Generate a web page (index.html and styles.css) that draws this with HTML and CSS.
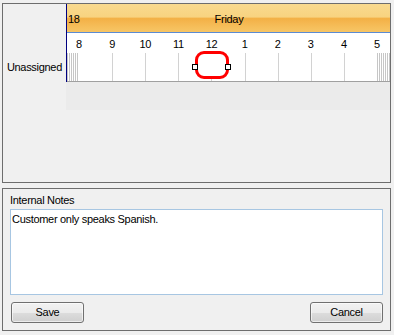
FILE: index.html
```html
<!DOCTYPE html>
<html>
<head>
<meta charset="utf-8">
<link rel="stylesheet" href="styles.css">
</head>
<body>
<div class="window">
  <div class="panel schedule">
    <div class="resources">
      <div class="resource-label">Unassigned</div>
    </div>
    <div class="timeline">
      <div class="timeline-main">
        <div class="day-header">
          <span class="day-num">18</span>
          <span class="day-name">Friday</span>
          <span></span>
        </div>
        <div class="hour-labels">
          <span>8</span><span>9</span><span>10</span><span>11</span><span>12</span><span>1</span><span>2</span><span>3</span><span>4</span><span>5</span>
        </div>
        <div class="row">
          <div class="offhours"></div>
          <div class="hours">
            <div class="cell"></div><div class="cell"></div><div class="cell"></div>
            <div class="cell"></div><div class="cell"></div><div class="cell"></div>
            <div class="cell"></div><div class="cell"></div><div class="cell"></div>
            <div class="appt">
              <span class="handle handle-left"></span>
              <span class="handle handle-right"></span>
            </div>
          </div>
          <div class="offhours offhours-end"></div>
        </div>
      </div>
      <div class="empty-row"></div>
    </div>
  </div>
  <div class="panel notes">
    <div class="notes-label">Internal Notes</div>
    <div class="notes-box">Customer only speaks Spanish.</div>
    <div class="actions">
      <button class="btn">Save</button>
      <button class="btn">Cancel</button>
    </div>
  </div>
</div>
</body>
</html>
```
FILE: styles.css
```css
* { box-sizing: border-box; }

body {
  margin: 0;
  width: 394px;
  height: 335px;
  overflow: hidden;
  background: #f0f0f0;
  font-family: "Liberation Sans", Arial, sans-serif;
  font-size: 11px;
  letter-spacing: -0.3px;
  color: #000;
}

.window {
  padding: 3px 0 0 2px;
  display: flex;
  flex-direction: column;
  gap: 5px;
}

.panel {
  width: 389px;
  border: 1px solid #6d6d6d;
}

.schedule {
  height: 180px;
  display: flex;
}

.resources {
  flex: 0 0 63px;
  padding-top: 49px;
}

.resource-label {
  height: 28px;
  display: flex;
  align-items: center;
  justify-content: flex-end;
  padding-right: 4px;
}

.timeline {
  flex: 1 1 0;
  min-width: 0;
}

.timeline-main {
  border-left: 1px solid #000080;
  background: #fff;
}

.day-header {
  height: 29px;
  border-bottom: 1px solid #5b8bd3;
  background: linear-gradient(#f9da8f 0%, #f8d380 46%, #f3b045 52%, #f4b54d 62%, #f7c666 100%);
  display: grid;
  grid-template-columns: 1fr auto 1fr;
  align-items: center;
  padding-left: 1px;
  padding-top: 1px;
}

.hour-labels {
  height: 20px;
  padding-top: 5px;
  line-height: 13px;
  display: flex;
  margin-left: -4.56px;
  overflow: visible;
}

.hour-labels span {
  flex: 0 0 33.111px;
  text-align: center;
}

.row {
  height: 29px;
  display: flex;
  border-bottom: 1px solid #a0a0a0;
}

.offhours {
  flex: 0 0 12px;
  background: repeating-linear-gradient(90deg, #c6c6c6 0 1px, #fff 1px 2px);
}

.offhours-end {
  flex: 1 1 0;
}

.hours {
  flex: 0 0 298px;
  position: relative;
  display: grid;
  grid-template-columns: repeat(9, 1fr);
}

.cell + .cell {
  border-left: 1px solid #d2d2d2;
}

.appt {
  position: absolute;
  left: 116px;
  top: -2px;
  width: 34px;
  height: 28px;
  border: 3px solid #ff0000;
  border-radius: 9px;
  background: #fff;
}

.handle {
  position: absolute;
  top: 10px;
  width: 6px;
  height: 6px;
  border: 1px solid #000;
  background: #fff;
}

.handle-left { left: -6px; }
.handle-right { left: 27px; }

.empty-row {
  height: 28px;
  background: #ebebeb;
}

.notes {
  height: 143px;
  padding: 5px 6px 7px 7px;
}

.notes-label {
  height: 13px;
  line-height: 13px;
  margin-bottom: 2px;
}

.notes-box {
  width: 373px;
  height: 86px;
  border: 1px solid #a7c6e2;
  background: #fff;
  padding: 3px 1px;
  line-height: 13px;
}

.actions {
  width: 373px;
  margin-top: 7px;
  padding-left: 1px;
  display: flex;
  justify-content: space-between;
}

.btn {
  width: 73px;
  height: 21px;
  padding: 0;
  border: 1px solid #707070;
  border-radius: 3px;
  background: linear-gradient(#f2f2f2 0%, #ebebeb 50%, #dddddd 50%, #cfcfcf 100%);
  box-shadow: inset 0 0 0 1px rgba(255, 255, 255, 0.6);
  font-family: inherit;
  font-size: 11px;
  letter-spacing: inherit;
  color: #000;
  line-height: 19px;
}
```
